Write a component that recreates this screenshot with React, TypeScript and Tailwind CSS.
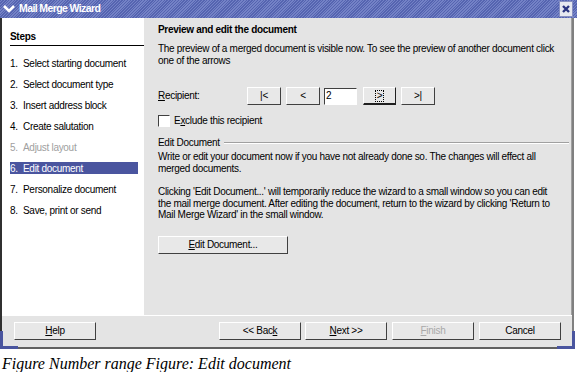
import React from 'react';

const steps = [
  { n: '1.', label: 'Select starting document' },
  { n: '2.', label: 'Select document type' },
  { n: '3.', label: 'Insert address block' },
  { n: '4.', label: 'Create salutation' },
  { n: '5.', label: 'Adjust layout', disabled: true },
  { n: '6.', label: 'Edit document', active: true },
  { n: '7.', label: 'Personalize document' },
  { n: '8.', label: 'Save, print or send' },
];

function Btn({
  children,
  className = '',
  focused = false,
  disabled = false,
}: {
  children: React.ReactNode;
  className?: string;
  focused?: boolean;
  disabled?: boolean;
}) {
  return (
    <button
      className={
        'flex h-[18px] items-center justify-center border bg-[#e8e8e8] text-[10px] leading-none ' +
        (focused
          ? 'border-t-white border-l-white border-r-[#202020] border-b-[#202020] border-b-2 '
          : 'border-t-white border-l-white border-r-[#404040] border-b-[#404040] ') +
        (disabled ? 'text-[#a8a8a8] ' : 'text-black ') +
        className
      }
    >
      {children}
    </button>
  );
}

export default function App() {
  return (
    <div className="relative h-[372px] w-[577px] overflow-hidden bg-white font-['Liberation_Sans',Arial,sans-serif] tracking-[-0.3px] text-black">
      <div className="flex h-[349px] w-[577px] flex-col">
        {/* title bar */}
        <div className="flex h-[18px] items-center bg-[repeating-linear-gradient(135deg,#5564b0_0px,#5564b0_1px,#7482c6_1px,#7482c6_2px)]">
          <svg width="14" height="12" viewBox="0 0 14 12" className="ml-[2px]">
            <path d="M2 3 L7 8 L12 3" stroke="white" strokeWidth="2.6" fill="none" />
          </svg>
          <span className="ml-[3px] text-[10.5px] font-bold tracking-[-0.6px] text-white">Mail Merge Wizard</span>
          <div className="ml-auto mr-[4px] flex h-[16px] w-[14px] items-center justify-center border border-[#8890c0] bg-[#e6e8f0]">
            <svg width="10" height="10" viewBox="0 0 10 10">
              <path d="M2 2 L8 8 M8 2 L2 8" stroke="#2a3480" strokeWidth="2.4" />
            </svg>
          </div>
        </div>

        <div className="mr-[3px] flex flex-1 flex-col border-b-2 border-l-2 border-r-2 border-b-[#606060] border-l-[#303030] border-r-[#808080]">
          <div className="flex h-[297px]">
            {/* steps */}
            <div className="w-[142px] bg-white pl-[8px] pt-[11px]">
              <div className="border-b border-black pb-[1px] text-[10px] font-bold">Steps</div>
              <div className="mt-[11px] flex flex-col gap-[9px] text-[10px]">
                {steps.map((s) => (
                  <div
                    key={s.n}
                    className={
                      'flex h-[12px] w-[128px] items-center ' +
                      (s.active ? 'bg-[#4a559f] text-white ' : '') +
                      (s.disabled ? 'text-[#a0a0a0]' : '')
                    }
                  >
                    <span className="w-[13px]">{s.n}</span>
                    <span>{s.label}</span>
                  </div>
                ))}
              </div>
            </div>

            {/* page */}
            <div className="flex-1 border-r border-[#a0a0a0] bg-[#e4e4e4] bg-[radial-gradient(#d6d6d6_0.6px,transparent_0.6px)] bg-[length:4px_4px] pl-[14px] pr-[2px] pt-[6px] text-[10px] leading-[12px]">
              <div className="font-bold">Preview and edit the document</div>
              <p className="mt-[7px] pr-[12px]">
                The preview of a merged document is visible now. To see the preview of another document click
                one of the arrows
              </p>
              <div className="mt-[20px] flex items-center">
                <span className="w-[89px]">
                  <u>R</u>ecipient:
                </span>
                <Btn className="w-[34px]">|&lt;</Btn>
                <Btn className="ml-[5px] w-[34px]">&lt;</Btn>
                <div className="ml-[4px] flex h-[17px] w-[33px] items-center border border-b-white border-l-[#404040] border-r-white border-t-[#404040] bg-white pl-[1px]">
                  2
                </div>
                <Btn focused className="ml-[6px] w-[33px]">
                  <span className="border border-dotted border-black px-[1px]">&gt;</span>
                </Btn>
                <Btn className="ml-[5px] w-[34px]">&gt;|</Btn>
              </div>
              <div className="mt-[10px] flex items-center">
                <div className="h-[12px] w-[12px] border border-b-white border-l-[#404040] border-r-white border-t-[#404040] bg-white" />
                <span className="ml-[4px]">
                  E<u>x</u>clude this recipient
                </span>
              </div>
              <div className="mt-[10px] flex items-center">
                <span>Edit Document</span>
                <div className="ml-[4px] h-0 flex-1 border-b border-t border-b-white border-[#a0a0a0]" />
              </div>
              <p className="mt-[2px] pr-[12px] leading-[11.5px]">
                Write or edit your document now if you have not already done so. The changes will effect all
                merged documents.
              </p>
              <p className="mt-[12px] pr-[12px] leading-[11.5px]">
                Clicking 'Edit Document...' will temporarily reduce the wizard to a small window so you can edit
                the mail merge document. After editing the document, return to the wizard by clicking 'Return to
                Mail Merge Wizard' in the small window.
              </p>
              <Btn className="mt-[15px] w-[130px]">
                <u>E</u>dit Document...
              </Btn>
            </div>
          </div>

          {/* buttons */}
          <div className="flex flex-1 items-start border-t border-white bg-[#e4e4e4] pl-[12px] pt-[6px]">
            <Btn className="w-[82px]">
              <u>H</u>elp
            </Btn>
            <Btn className="ml-[123px] w-[82px]">
              &lt;&lt; Bac<u>k</u>
            </Btn>
            <Btn className="ml-[4px] w-[82px]">
              <u>N</u>ext &gt;&gt;
            </Btn>
            <Btn disabled className="ml-[5px] w-[82px]">
              <u>F</u>inish
            </Btn>
            <Btn className="ml-[5px] w-[82px]">Cancel</Btn>
          </div>
        </div>
      </div>

      {/* resize corners */}
      <div className="absolute left-0 top-[331px] h-[18px] w-[18px] border-b-[3px] border-l-[3px] border-[#4a559f]" />
      <div className="absolute left-[557px] top-[331px] h-[18px] w-[18px] border-b-[3px] border-r-[3px] border-[#4a559f]" />

      <div className="pl-[2px] pt-[3px] font-['Liberation_Serif',serif] text-[16px] italic tracking-normal">
        Figure Number range Figure: Edit document
      </div>
    </div>
  );
}
